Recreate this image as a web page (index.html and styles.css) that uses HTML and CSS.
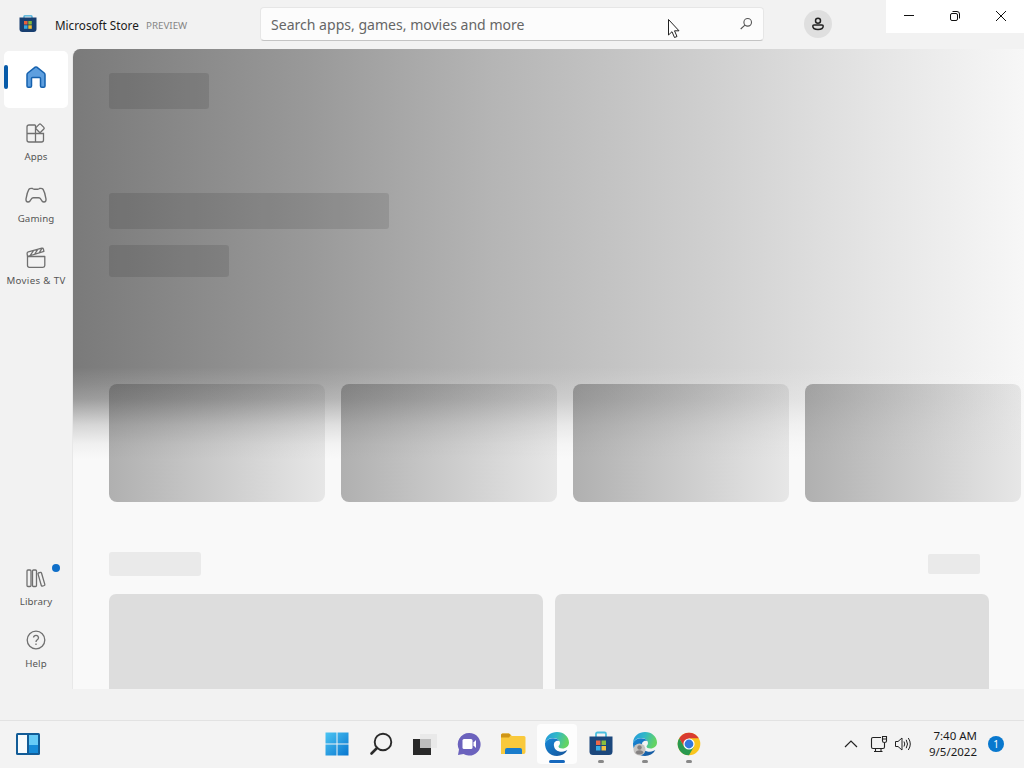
FILE: index.html
```html
<!DOCTYPE html>
<html lang="en">
<head>
  <meta charset="UTF-8">
  <title>Microsoft Store</title>
  <link rel="stylesheet" href="styles.css">
</head>
<body>
  <header class="titlebar">
    <svg class="logo" width="18" height="18" viewBox="0 0 18 18">
      <path d="M5 3V1.500Q5 .8 5.700.8H12.300Q13 .8 13 1.500V3" fill="none" stroke="#39a9d8" stroke-width="1.2"/>
      <path d="M.5 2.500H17.500V14Q17.500 17 14.500 17H3.500Q.5 17 .5 14Z" fill="#183f70"/>
      <path d="M5 6h3.500v3.500H5z" fill="#e8623c"/><path d="M9.300 6H12.800V9.500H9.300z" fill="#83b93b"/>
      <path d="M5 10.300h3.500v3.500H5z" fill="#35a8e0"/><path d="M9.300 10.300H12.800v3.500H9.300z" fill="#efbd32"/>
    </svg>
    <span class="app-name">Microsoft Store</span>
    <span class="preview">PREVIEW</span>
    <div class="search">
      <span>Search apps, games, movies and more</span>
      <svg width="14" height="14" viewBox="0 0 14 14" fill="none" stroke="#555" stroke-width="1.1"><circle cx="8.700" cy="5.300" r="3.800"/><path d="M5.900 8.100L1.700 12"/></svg>
    </div>
    <div class="avatar">
      <svg width="14" height="14" viewBox="0 0 14 14" fill="none" stroke="#222" stroke-width="1.500"><circle cx="7" cy="3.700" r="2.500"/><path d="M3 7.900H11Q12.200 7.900 12.200 9Q12.200 12.500 7 12.500T1.800 9Q1.800 7.900 3 7.900Z"/></svg>
    </div>
    <div class="window-buttons">
      <svg width="12" height="12" viewBox="0 0 12 12"><path d="M1 5.500H11" stroke="#111"/></svg>
      <svg width="12" height="12" viewBox="0 0 12 12" fill="none" stroke="#111"><rect x="1.500" y="3.500" width="7" height="7" rx="1.500"/><path d="M3.500 1.500H8Q10.500 1.500 10.500 4V8.500"/></svg>
      <svg width="12" height="12" viewBox="0 0 12 12"><path d="M1 1L11 11M11 1L1 11" stroke="#111"/></svg>
    </div>
  </header>

  <div class="window">
    <nav class="sidebar">
      <a class="nav-item active">
        <svg width="22" height="24" viewBox="0 0 22 24"><path d="M2 9.700Q2 8.700 2.800 8L10.200 2.200Q11 1.600 11.800 2.200L19.200 8Q20 8.700 20 9.700V21Q20 22.300 18.700 22.300H16.800Q15.500 22.300 15.500 21V13.500Q15.500 12.500 14.500 12.500H7.500Q6.500 12.500 6.500 13.500V21Q6.500 22.300 5.200 22.300H3.300Q2 22.300 2 21Z" fill="#5e9fdf" stroke="#1561ae" stroke-width="1.500"/></svg>
      </a>
      <a class="nav-item">
        <svg width="22" height="22" viewBox="0 0 22 22" fill="none" stroke="#707070" stroke-width="1.300"><path d="M10.500 3H4Q2 3 2 5V18Q2 20 4 20H16.500Q18.500 20 18.500 18V11.500H2M10.500 3V20"/><rect x="11.700" y="2.900" width="6.600" height="6.600" rx="1.200" transform="rotate(45 15 6.200)" fill="#f2f2f2"/></svg>
        <span>Apps</span>
      </a>
      <a class="nav-item">
        <svg width="22" height="22" viewBox="0 0 22 22" fill="none" stroke="#707070" stroke-width="1.400" stroke-linejoin="round"><path d="M4 5.200Q5 4 7.500 4.500Q8.500 5.200 9 5.200H13Q13.500 5.200 14.500 4.500Q17 4 18 5.200Q20 8.500 21 15Q21.200 18 19 18Q17.800 18 16.800 16.700L15 14.200Q14.500 13.700 13.500 13.700H8.500Q7.500 13.700 7 14.200L5.200 16.700Q4.200 18 3 18Q.8 18 1 15Q2 8.500 4 5.200Z"/></svg>
        <span>Gaming</span>
      </a>
      <a class="nav-item">
        <svg width="22" height="22" viewBox="0 0 22 22" fill="none" stroke="#707070" stroke-width="1.300" stroke-linejoin="round"><path d="M2.500 10.500H19.800V19.500Q19.800 21.300 18 21.300H4.300Q2.500 21.300 2.500 19.500Z"/><path d="M2.500 10.500L2.100 7.600Q2 6.300 3.300 5.900L16.800 2.200Q18.100 1.900 18.400 3.100L18.900 5.400L2.500 10.500M5.200 9.500L8.500 4.600M9.700 8.100L12.700 3.500M14.200 6.800L16.900 2.400"/></svg>
        <span class="movies">Movies &amp; TV</span>
      </a>
      <a class="nav-item library">
        <i class="dot"></i>
        <svg width="22" height="22" viewBox="0 0 22 22" fill="none" stroke="#707070" stroke-width="1.300"><rect x="2" y="3" width="4" height="16.500" rx="1"/><rect x="7.500" y="3" width="4" height="16.500" rx="1"/><path d="M13.300 6L15.500 5.400Q16.300 5.200 16.500 6L19.800 17.400Q20 18.200 19.300 18.500L17.300 19.100Q16.500 19.300 16.300 18.500L13 6.900Q12.800 6.200 13.300 6Z"/></svg>
        <span>Library</span>
      </a>
      <a class="nav-item">
        <svg width="22" height="22" viewBox="0 0 22 22" fill="none" stroke="#707070" stroke-width="1.300"><circle cx="11" cy="11" r="8.800"/><path d="M8.500 8.500Q8.800 6.300 11 6.300T13.500 8.700Q13.500 9.900 12 11Q11 11.800 11 13M11 14.500V16"/></svg>
        <span>Help</span>
      </a>
    </nav>

    <main class="content">
      <section class="hero">
        <div class="bar bar-tag"></div>
        <div class="bar bar-title"></div>
        <div class="bar bar-button"></div>
        <div class="cards">
          <div class="card"></div>
          <div class="card"></div>
          <div class="card"></div>
          <div class="card"></div>
        </div>
      </section>
      <section class="collection">
        <div class="heading">
          <div class="heading-title"></div>
          <div class="heading-link"></div>
        </div>
        <div class="tiles">
          <div class="tile"></div>
          <div class="tile"></div>
        </div>
      </section>
    </main>
  </div>

  <footer class="taskbar">
    <svg class="widgets" width="24" height="22" viewBox="0 0 24 22"><rect width="24" height="22" rx="1.500" fill="#125c97"/><path d="M2 2H11V20H2z" fill="#f7fbfd"/><path d="M13 2H22V12H13z" fill="#66cbf7"/><path d="M13 12H22V20H13z" fill="#168bd8"/></svg>
    <div class="apps">
      <div class="app">
        <svg width="24" height="24" viewBox="0 0 24 24"><defs><linearGradient id="win" x2="1" y2="1"><stop stop-color="#4cc5f3"/><stop offset="1" stop-color="#0876cf"/></linearGradient></defs><path d="M.5 .5H11.500V11.500H.5zM12.500 .5H23.500V11.500H12.500zM.5 12.500H11.500V23.500H.5zM12.500 12.500H23.500V23.500H12.500z" fill="url(#win)"/></svg>
      </div>
      <div class="app">
        <svg width="24" height="24" viewBox="0 0 24 24" fill="none" stroke="#2a2a2a"><circle cx="14" cy="10" r="8.300" stroke-width="1.900"/><path d="M8 16L2.500 21.500" stroke-width="2.600" stroke-linecap="round"/></svg>
      </div>
      <div class="app">
        <svg width="24" height="24" viewBox="0 0 24 24"><path d="M7 2H24V16H7z" fill="#e9e9e9"/><path d="M0 7H18V23H0z" fill="#292929"/><path d="M7 7H18V16H7z" fill="#bdbdbd"/></svg>
      </div>
      <div class="app">
        <svg width="24" height="24" viewBox="0 0 24 24"><path d="M12 1A11.300 11.300 0 1 1 6.500 22L1 23L2 17.500A11.300 11.300 0 0 1 12 1Z" fill="#6b62bd"/><rect x="5.500" y="7" width="10" height="10" rx="1.500" fill="#fff"/><path d="M16.500 10.500L19 8V16L16.500 13.500Z" fill="#fff"/></svg>
      </div>
      <div class="app">
        <svg width="26" height="24" viewBox="0 0 26 24"><path d="M1 3Q1 1.500 2.500 1.500H9L12 4H24Q25.500 4 25.500 5.500V20Q25.500 22 23.500 22H1Z" fill="#f9c93c"/><path d="M1 3Q1 1.500 2.500 1.500H9L10.800 3L9 5.500H1Z" fill="#cf9516"/><path d="M5 22V18Q5 16 7 16H20Q22 16 22 18V22Z" fill="#197ccb"/></svg>
      </div>
      <div class="app open">
        <svg width="26" height="26" viewBox="0 0 26 26"><defs><linearGradient id="edgeTop" x2="1" y2=".3"><stop stop-color="#2395dd"/><stop offset=".5" stop-color="#31b8c8"/><stop offset="1" stop-color="#64d363"/></linearGradient><linearGradient id="edgeSide" y2="1" x2="1"><stop stop-color="#1688d8"/><stop offset="1" stop-color="#155399"/></linearGradient></defs>
          <path d="M1 12C1.500 4.500 7 1 13 1C20 1 25 6 25 11.500C25 15 22 17.500 18.500 17.500C16 17.500 14.500 16.500 14.500 15.500C14.500 14.500 16 14 16 12C16 9 12.500 7 9 7C5 7 2.500 9 1 12Z" fill="url(#edgeTop)"/>
          <path d="M1 12C2.500 9 5.500 7.300 9 7.300C12 7.300 14.500 8.500 15.500 10C11 9 9.500 12 10 15C10.500 19 14.500 21 18 20.700C20.500 20.500 22.500 19 23.300 19.300C21 23 17.500 25 13 25C5.500 25 .7 19 1 12Z" fill="url(#edgeSide)"/></svg>
        <i class="mark"></i>
      </div>
      <div class="app">
        <svg width="24" height="26" viewBox="0 0 24 26"><path d="M7 6V3Q7 1.500 8.500 1.500H15.500Q17 1.500 17 3V6" fill="none" stroke="#4bbfdf" stroke-width="1.800"/><path d="M.5 5.500H23.500V20.500Q23.500 24 20 24H4Q.5 24 .5 20.500Z" fill="#1b477c"/><path d="M7 9.500h4.500V14H7z" fill="#ed6848"/><path d="M12.500 9.500H17V14H12.500z" fill="#8bbe3e"/><path d="M7 15h4.500v4.500H7z" fill="#38aee8"/><path d="M12.500 15H17v4.500H12.500z" fill="#f3c143"/></svg>
        <i class="mark"></i>
      </div>
      <div class="app">
        <svg width="26" height="26" viewBox="0 0 26 26"><path d="M1 12C1.500 4.500 7 1 13 1C20 1 25 6 25 11.500C25 15 22 17.500 18.500 17.500C16 17.500 14.500 16.500 14.500 15.500C14.500 14.500 16 14 16 12C16 9 12.500 7 9 7C5 7 2.500 9 1 12Z" fill="url(#edgeTop)"/><path d="M1 12C2.500 9 5.500 7.300 9 7.300C12 7.300 14.500 8.500 15.500 10C11 9 9.500 12 10 15C10.500 19 14.500 21 18 20.700C20.500 20.500 22.500 19 23.300 19.300C21 23 17.500 25 13 25C5.500 25 .7 19 1 12Z" fill="url(#edgeSide)"/><circle cx="7.500" cy="18.500" r="6" fill="#c6c4c2"/><circle cx="7.500" cy="16.500" r="2.200" fill="#858282"/><path d="M3.500 22Q4 19.300 7.500 19.300T11.500 22Q7.500 25 3.500 22Z" fill="#858282"/></svg>
        <i class="mark"></i>
      </div>
      <div class="app">
        <svg width="24" height="24" viewBox="0 0 24 24"><circle cx="12" cy="12" r="11.300" fill="#f9c51d"/><path d="M2.210 6.350A11.300 11.300 0 0 1 21.790 6.350H12L7.110 14.830Z" fill="#d93b30"/><path d="M2.210 6.350A11.300 11.300 0 0 0 12 23.300L16.890 14.830H7.110Z" fill="#29994f"/><circle cx="12" cy="12" r="5.600" fill="#fff"/><circle cx="12" cy="12" r="4.400" fill="#3278de"/></svg>
        <i class="mark"></i>
      </div>
    </div>
    <div class="tray">
      <svg width="14" height="10" viewBox="0 0 14 10"><path d="M1 8L7 2L13 8" fill="none" stroke="#222" stroke-width="1.200"/></svg>
      <svg class="network" width="18" height="18" viewBox="0 0 18 18" fill="none" stroke="#222" stroke-width="1.100"><path d="M11 2.500H3Q1.500 2.500 1.500 4V12Q1.500 13.500 3 13.500H13Q14.500 13.500 14.500 12V7.500M5.500 13.500V16.500M11 13.500V16.500M4 16.500H12.500M12.500 1.500H16.500V6Q16.500 7.500 14.500 7.500T12.500 6ZM12.500 4H16.500"/></svg>
      <svg width="18" height="16" viewBox="0 0 18 16" fill="none" stroke="#222"><path d="M1.500 5.500H4L8 2V14L4 10.500H1.500ZM10 5.500Q11.500 8 10 10.500M12.200 3.800Q14.800 8 12.200 12.200M14.300 2Q18.300 8 14.300 14"/></svg>
      <div class="clock"><span>7:40 AM</span><span>9/5/2022</span></div>
      <span class="count">1</span>
    </div>
  </footer>

  <svg class="cursor" width="14" height="22" viewBox="0 0 14 22"><path d="M1.500 1.500V17L5 13.700L7.500 19.500L10 18.500L7.500 12.800H12Z" fill="#fff" stroke="#222"/></svg>
</body>
</html>
```
FILE: styles.css
```css
* {
  box-sizing: border-box;
}

body {
  margin: 0;
  width: 1024px;
  height: 768px;
  overflow: hidden;
  display: flex;
  flex-direction: column;
  background: #f2f2f2;
  font-family: "Noto Sans", "Open Sans", sans-serif;
  color: #1b1b1b;
}

svg {
  display: block;
  flex: none;
}

/* title bar */
.titlebar {
  display: flex;
  align-items: center;
  height: 49px;
  flex: none;
  padding-bottom: 1px;
}

.logo {
  margin-left: 19px;
}

.app-name {
  width: 84px;
  margin-left: 18px;
  padding-top: 1px;
  font-size: 11.7px;
  white-space: nowrap;
}

.preview {
  width: 42px;
  margin-left: 7px;
  padding-top: 2px;
  font-size: 9.8px;
  color: #868686;
}

.search {
  display: flex;
  align-items: center;
  justify-content: space-between;
  width: 504px;
  height: 34px;
  margin-left: 72px;
  padding: 0 10px;
  background: #fcfcfc;
  border: 1px solid #e6e6e6;
  border-bottom-color: #c4c4c4;
  border-radius: 4px;
  font-size: 14.05px;
  color: #666;
}

.avatar {
  display: flex;
  align-items: center;
  justify-content: center;
  width: 28px;
  height: 28px;
  margin-left: 40px;
  border-radius: 50%;
  background: #dfdfdf;
}

.window-buttons {
  display: flex;
  align-items: center;
  align-self: flex-start;
  justify-content: space-between;
  width: 138px;
  height: 33px;
  margin-left: auto;
  padding: 0 17px 2px;
  background: #fff;
}

/* store window */
.window {
  display: flex;
  height: 640px;
  flex: none;
}

.sidebar {
  display: flex;
  flex-direction: column;
  width: 72px;
  flex: none;
  padding: 2px 4px 11px;
}

.nav-item {
  position: relative;
  display: flex;
  flex-direction: column;
  align-items: center;
  height: 62px;
  flex: none;
  padding-top: 13px;
  font-size: 9.7px;
  line-height: 14px;
  letter-spacing: .1px;
  white-space: nowrap;
  color: #555;
}

.nav-item span {
  margin-top: 6px;
}

.nav-item .movies {
  letter-spacing: .35px;
}

.active {
  height: 57px;
  margin-bottom: 1px;
  padding-top: 14px;
  border-radius: 5px;
  background: #fff;
}

.active::before {
  content: "";
  position: absolute;
  left: 0;
  top: 14px;
  width: 4px;
  height: 24px;
  border-radius: 2px;
  background: #075aa8;
}

.library {
  margin-top: auto;
}

.dot {
  position: absolute;
  top: 10px;
  right: 8px;
  width: 8px;
  height: 8px;
  border-radius: 50%;
  background: #0f6fc9;
}

.content {
  width: 952px;
  overflow: hidden;
  border-left: 1px solid #e8e8e8;
  border-top-left-radius: 8px;
  background: #f9f9f9;
}

.hero {
  height: 453px;
  padding: 24px 0 0 36px;
  background:
    linear-gradient(to bottom, rgba(249,249,249,0) 318px, rgba(249,249,249,.12) 335px, rgba(249,249,249,.26) 350px, rgba(249,249,249,.72) 376px, rgba(249,249,249,.93) 395px, #f9f9f9 410px),
    linear-gradient(to right, #7a7a7a, #999 235px, #b5b5b5 420px, #cfcfcf 635px, #e6e6e6 810px, #f7f7f7 951px);
}

.bar {
  height: 36px;
  border-radius: 3px;
  background: rgba(0, 0, 0, .1);
}

.bar-tag {
  width: 100px;
}

.bar-title {
  width: 280px;
  margin-top: 84px;
}

.bar-button {
  width: 120px;
  height: 32px;
  margin-top: 16px;
}

.cards {
  display: flex;
  gap: 16px;
  margin-top: 107px;
}

.card {
  width: 216px;
  height: 118px;
  flex: none;
  border-radius: 8px;
  background: linear-gradient(to right, rgba(71,71,71,.41), rgba(71,71,71,.1));
}

.collection {
  padding: 50px 35px 0 36px;
}

.heading {
  display: flex;
  align-items: center;
  justify-content: space-between;
  padding-right: 9px;
}

.heading-title {
  width: 92px;
  height: 24px;
  border-radius: 3px;
  background: #eaeaea;
}

.heading-link {
  width: 52px;
  height: 20px;
  border-radius: 2px;
  background: #eaeaea;
}

.tiles {
  display: flex;
  gap: 12px;
  margin-top: 18px;
}

.tile {
  width: 434px;
  height: 120px;
  flex: none;
  border-radius: 7px;
  background: #ddd;
}

/* taskbar */
.taskbar {
  display: flex;
  align-items: center;
  height: 48px;
  margin-top: auto;
  padding: 0 20px 1px 16px;
  border-top: 1px solid #e2e2e2;
  background: #f3f3f3;
}

.apps {
  display: flex;
  gap: 4px;
  margin-left: 277px;
}

.app {
  position: relative;
  display: flex;
  align-items: center;
  justify-content: center;
  width: 40px;
  height: 40px;
  border-radius: 4px;
}

.open {
  background: #fdfdfd;
}

.mark {
  position: absolute;
  bottom: 1px;
  width: 6px;
  height: 3px;
  border-radius: 2px;
  background: #888;
}

.open .mark {
  width: 16px;
  background: #1668bd;
}

.tray {
  display: flex;
  align-items: center;
  margin-left: auto;
}

.network {
  margin: 0 6px 0 12px;
}

.clock {
  display: flex;
  flex-direction: column;
  align-items: flex-end;
  width: 65px;
  font-size: 11.5px;
  line-height: 16px;
}

.count {
  width: 16px;
  height: 16px;
  margin: 0 0 0 11px;
  border-radius: 50%;
  background: #0878ce;
  color: #fff;
  font-size: 10px;
  line-height: 16px;
  text-align: center;
}

.cursor {
  position: absolute;
  left: 667px;
  top: 18px;
}
```
